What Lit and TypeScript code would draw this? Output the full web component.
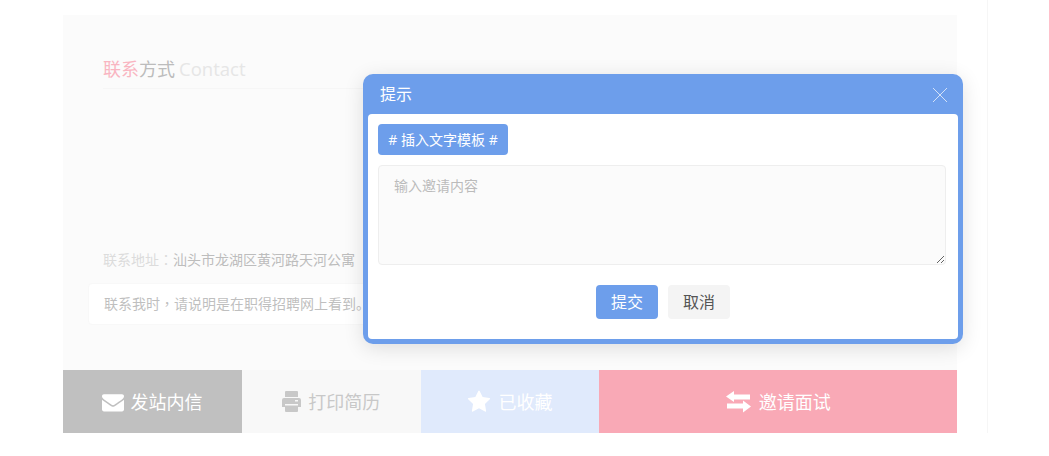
import { LitElement, css, html, svg } from "lit";
import { customElement } from "lit/decorators.js";

const ACTIONS = [
  {
    label: "发站内信",
    cls: "mail",
    w: 22,
    h: 22,
    box: "0 0 1792 1792",
    d: "M1792 710v794q0 66-47 113t-113 47h-1472q-66 0-113-47t-47-113v-794q44 49 101 87 362 246 497 345 57 42 92.500 65.500t94.500 48 110 24.500h2q51 0 110-24.500t94.500-48 92.500-65.500q170-123 498-345 57-39 100-87zm0-294q0 79-49 151t-122 123q-376 261-468 325-10 7-42.500 30.500t-54 38-52 32.500-57.500 27-50 9h-2q-23 0-50-9t-57.500-27-52-32.500-54-38-42.500-30.500q-91-64-262-182.500t-205-142.500q-62-42-117-115.500t-55-136.500q0-78 41.500-130t118.500-52h1472q65 0 112.500 47t47.500 113z",
  },
  {
    label: "打印简历",
    cls: "print",
    w: 20,
    h: 21,
    box: "0 0 20 21",
    d: "M3 1a1 1 0 0 1 1-1h11a1 1 0 0 1 1 1v5H3zM2 7h15a2 2 0 0 1 2 2v7h-3v-3H3v3H0V9a2 2 0 0 1 2-2zM13 9v1.500h3V9zM3 14.500h13V20a1 1 0 0 1-1 1H4a1 1 0 0 1-1-1z",
  },
  {
    label: "已收藏",
    cls: "fav",
    w: 24,
    h: 24,
    box: "0 0 1792 1792",
    d: "M1728 647q0 22-26 48l-363 354 86 500q1 7 1 20 0 21-10.500 35.500t-30.500 14.500q-19 0-40-12l-449-236-449 236q-22 12-40 12-21 0-31.500-14.500t-10.500-35.500q0-6 2-20l86-500-364-354q-25-27-25-48 0-37 56-46l502-73 225-455q19-41 49-41t49 41l225 455 502 73q56 9 56 46z",
  },
  {
    label: "邀请面试",
    cls: "invite",
    w: 25,
    h: 22,
    box: "0 0 25 22",
    d: "M0 5.500L8 0V3.500H24V8.500H8V11zM1 12.500H17V9.500L25 15.500L17 21.500V17.500H1z",
  },
];

@customElement("app-root")
export class AppRoot extends LitElement {
  static styles = css`
    :host {
      display: block;
      position: relative;
      height: 456px;
      background: #fff;
      font-family: "Noto Sans CJK SC", "Liberation Sans", sans-serif;
      overflow: hidden;
    }

    .page {
      width: 925px;
      height: 433px;
      margin-left: 63px;
      padding-top: 15px;
      box-sizing: border-box;
      border-right: 1px solid #f6f6f6;
    }

    .panel {
      width: 894px;
      height: 355px;
      box-sizing: border-box;
      padding: 35px 40px 0;
      background: #fbfbfb;
    }

    .heading {
      height: 39px;
      margin: 0;
      box-sizing: border-box;
      border-bottom: 1px solid #f6f6f6;
      font-size: 18px;
      font-weight: 400;
      line-height: 36px;
      color: #bcbcbc;
    }

    .heading em {
      font-style: normal;
      color: #f9b5c1;
    }

    .heading span {
      color: #e6e6e6;
      font-family: "Open Sans", "Liberation Sans", sans-serif;
      font-size: 18.5px;
    }

    .address {
      margin-top: 160px;
      font-size: 14px;
      line-height: 20px;
      color: #bdbdbd;
    }

    .address b {
      font-weight: 400;
      color: #dcdcdc;
    }

    .punct {
      font-family: "Noto Sans CJK TC", sans-serif;
    }

    .note {
      height: 42px;
      margin: 14px -15px 0;
      padding: 0 15px;
      box-sizing: border-box;
      border: 1px solid #f8f8f8;
      border-radius: 4px;
      background: #fff;
      font-size: 14px;
      line-height: 39px;
      color: #bfbfbf;
    }

    .actions {
      display: grid;
      grid-template-columns: 2fr 2fr 2fr 4fr;
      width: 894px;
      height: 63px;
    }

    .action {
      display: flex;
      align-items: center;
      justify-content: center;
      gap: 6px;
      font-size: 18px;
      color: #fff;
    }

    .action span {
      position: relative;
      top: -1px;
    }

    .action svg {
      fill: currentColor;
      flex: none;
    }

    .mail {
      background: #c0c0c0;
    }

    .print {
      background: #f8f8f8;
      color: #c8c8c8;
    }

    .fav {
      gap: 7px;
      background: #e0eafc;
    }

    .invite {
      gap: 8px;
      background: #f9a9b6;
    }

    .dialog {
      position: absolute;
      left: 363px;
      top: 74px;
      width: 600px;
      height: 270px;
      box-sizing: border-box;
      border-radius: 10px;
      background: #6d9eeb;
      box-shadow: 0 4px 20px rgba(0, 0, 0, 0.12);
    }

    .dialog-head {
      display: flex;
      align-items: center;
      justify-content: space-between;
      height: 40px;
      padding: 0 15px 0 17px;
      font-size: 16px;
      color: #fff;
    }

    .dialog-head span {
      margin-bottom: 2px;
    }

    .dialog-head svg {
      display: block;
      margin-top: 2px;
      stroke: #d4e2f8;
      stroke-width: 1;
      fill: none;
    }

    .dialog-body {
      height: 225px;
      margin: 0 5px;
      padding: 10px;
      box-sizing: border-box;
      border-radius: 4px;
      background: #fff;
    }

    .tag {
      display: block;
      width: 130px;
      height: 31px;
      padding: 0 0 2px;
      border: 0;
      border-radius: 4px;
      background: #6d9eeb;
      color: #fff;
      font: 400 14px "Open Sans", "Noto Sans CJK SC", sans-serif;
    }

    textarea {
      display: block;
      width: 568px;
      height: 100px;
      margin-top: 10px;
      padding: 9px 15px;
      box-sizing: border-box;
      border: 1px solid #eee;
      border-radius: 4px;
      background: #fbfbfb;
      font: 14px/20px "Noto Sans CJK SC", "Liberation Sans", sans-serif;
      outline: none;
    }

    textarea::placeholder {
      color: #bbb;
    }

    .dialog-foot {
      display: flex;
      justify-content: center;
      gap: 10px;
      margin-top: 20px;
    }

    .dialog-foot button {
      width: 62px;
      height: 34px;
      padding: 0 0 2px;
      border: 0;
      border-radius: 4px;
      font: 16px "Noto Sans CJK SC", "Liberation Sans", sans-serif;
    }

    .submit {
      background: #6d9eeb;
      color: #fff;
    }

    .cancel {
      background: #f4f4f4;
      color: #555;
    }
  `;

  render() {
    return html`
      <div class="page">
        <section class="panel">
          <h2 class="heading"><em>联系</em>方式 <span>Contact</span></h2>
          <div class="address"><b>联系地址<span class="punct">：</span></b>汕头市龙湖区黄河路天河公寓</div>
          <div class="note">联系我时<span class="punct">，</span>请说明是在职得招聘网上看到。</div>
        </section>
        <div class="actions">
          ${ACTIONS.map(
            (a) => html`
              <div class="action ${a.cls}">
                <svg width=${a.w} height=${a.h} viewBox=${a.box}>
                  ${svg`<path fill-rule="evenodd" d=${a.d}></path>`}
                </svg>
                <span>${a.label}</span>
              </div>
            `
          )}
        </div>
      </div>
      <div class="dialog">
        <div class="dialog-head">
          <span>提示</span>
          <svg width="16" height="16" viewBox="0 0 16 16">
            <path d="M1 1L15 15M15 1L1 15"></path>
          </svg>
        </div>
        <div class="dialog-body">
          <button class="tag"># 插入文字模板 #</button>
          <textarea placeholder="输入邀请内容"></textarea>
          <div class="dialog-foot">
            <button class="submit">提交</button>
            <button class="cancel">取消</button>
          </div>
        </div>
      </div>
    `;
  }
}
